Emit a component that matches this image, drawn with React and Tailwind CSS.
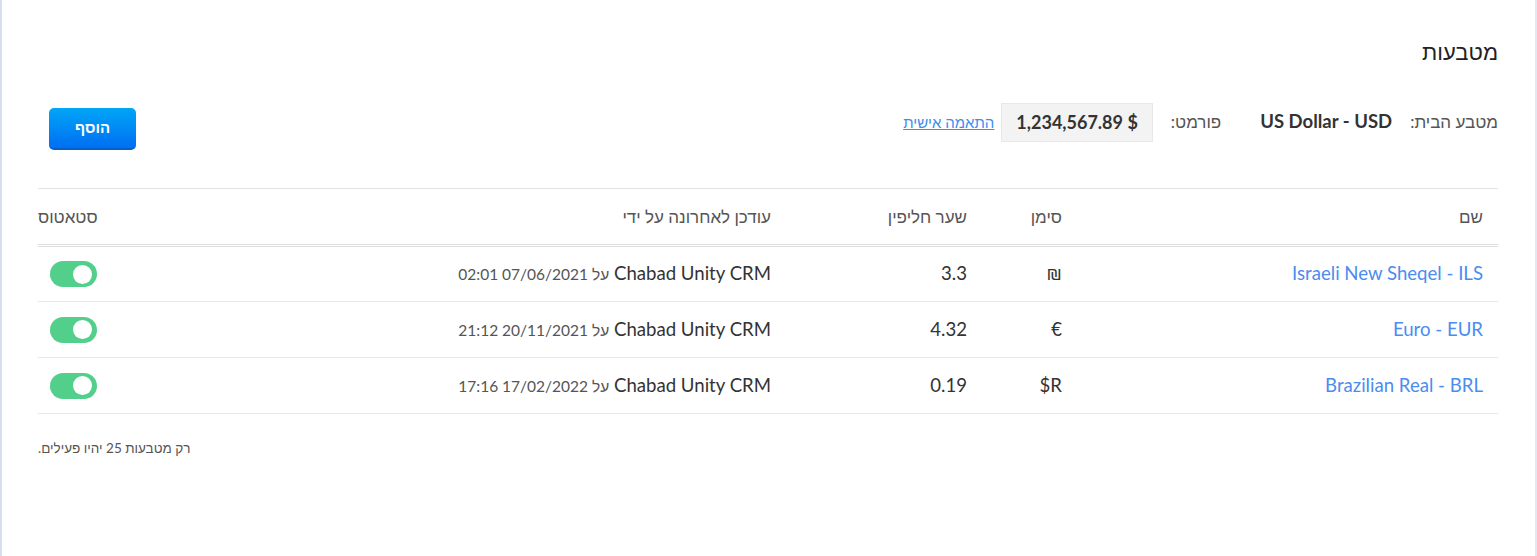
import React from "react";

const rows = [
  { name: "Israeli New Sheqel - ILS", symbol: "₪", rate: "3.3", date: "07/06/2021 02:01" },
  { name: "Euro - EUR", symbol: "€", rate: "4.32", date: "20/11/2021 21:12" },
  { name: "Brazilian Real - BRL", symbol: "$R", rate: "0.19", date: "17/02/2022 17:16" },
];

const Toggle = () => (
  <div className="w-[47px] h-[26px] rounded-full bg-[#52d08b] flex items-center justify-start pr-[5px]">
    <div className="w-[19px] h-[19px] rounded-full bg-white" />
  </div>
);

export default function App() {
  return (
    <div
      dir="rtl"
      className="h-[556px] bg-white border-l-2 border-r-2 border-l-[#d7deef] border-r-[#e3e8f2] pr-[37px] pl-[36px] text-[#333]"
      style={{ fontFamily: 'Lato, "Liberation Sans", sans-serif' }}
    >
      <h1 className="pt-[40px] text-[22px] leading-[24px] text-[#222]">מטבעות</h1>

      <div className="flex items-center justify-between mt-[37px] h-[42px]">
        <div className="flex items-center">
          <span className="text-[17px] text-[#555]">מטבע הבית:</span>
          <span className="mr-[18px] text-[18.5px] font-bold text-[#333]">US Dollar - USD</span>
          <span className="mr-[39px] text-[17px] text-[#555]">פורמט:</span>
          <div className="mr-[18px] h-[39px] px-[14px] flex items-center bg-[#f3f3f3] border border-[#e8e8e8] text-[18px] font-bold text-[#333]" dir="ltr">
            1,234,567.89 $
          </div>
          <a href="#" className="mr-[7px] text-[15px] text-[#3d8ef0] underline">התאמה אישית</a>
        </div>
        <button className="ml-[11px] mt-[13px] w-[87px] h-[42px] rounded-[5px] bg-gradient-to-b from-[#04a5f7] to-[#006ef2] border-b-2 border-[#0561c9] text-white font-bold text-[15px]">
          הוסף
        </button>
      </div>

      <table className="w-full mt-[45px] border-t border-[#e2e2e2] border-collapse">
        <thead>
          <tr className="h-[57px] border-b-[3px] border-double border-[#dedede]">
            <th className="w-[421px] pr-[15px] text-right font-normal text-[17px] text-[#555]">שם</th>
            <th className="w-[95px] pr-[15px] text-right font-normal text-[17px] text-[#555]">סימן</th>
            <th className="w-[196px] pr-[15px] text-right font-normal text-[17px] text-[#555]">שער חליפין</th>
            <th className="pr-[15px] text-right font-normal text-[17px] text-[#555]">עודכן לאחרונה על ידי</th>
            <th className="w-[74px] pr-[15px] text-right font-normal text-[17px] text-[#555] whitespace-nowrap">סטאטוס</th>
          </tr>
        </thead>
        <tbody>
          {rows.map((r) => (
            <tr key={r.name} className="h-[56px] border-b border-[#e8e8e8]">
              <td className="pr-[15px] text-[18.6px] text-[#4a8cf0]">{r.name}</td>
              <td className="pr-[15px] text-[18.6px] text-[#333]"><span dir="ltr">{r.symbol}</span></td>
              <td className="pr-[15px] text-[18.6px] text-[#333]">{r.rate}</td>
              <td className="pr-[15px] text-[18.6px] text-[#333]">
                Chabad Unity CRM <span className="text-[15.5px] text-[#555]">על {r.date}</span>
              </td>
              <td className="pr-[16px]"><Toggle /></td>
            </tr>
          ))}
        </tbody>
      </table>

      <p className="mt-[24px] text-[13.5px] text-[#555] text-left">רק מטבעות 25 יהיו פעילים.</p>
    </div>
  );
}
